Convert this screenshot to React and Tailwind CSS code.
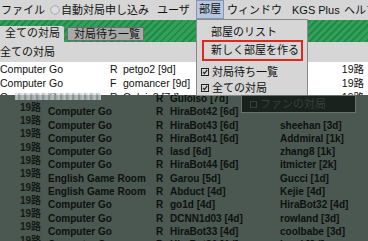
const rows = [
  ["Computer Go", "HiraBot42 [6d]", ""],
  ["Computer Go", "HiraBot43 [6d]", "sheehan [3d]"],
  ["Computer Go", "HiraBot41 [6d]", "Addmiral [1k]"],
  ["Computer Go", "lasd [6d]", "zhang8 [1k]"],
  ["Computer Go", "HiraBot44 [6d]", "itmicter [2k]"],
  ["English Game Room", "Garou [5d]", "Gucci [1d]"],
  ["English Game Room", "Abduct [4d]", "Kejie [4d]"],
  ["Computer Go", "go1d [4d]", "HiraBot32 [4d]"],
  ["Computer Go", "DCNN1d03 [4d]", "rowland [3d]"],
  ["Computer Go", "HiraBot33 [4d]", "coolbabe [3d]"],
  ["Computer Go", "HiraBot30 [4d]", "kumi [3d]"],
]

function Check({ color = "#222" }) {
  return (
    <svg width="8" height="8" viewBox="0 0 8 8" className="shrink-0">
      <rect x="0.5" y="0.5" width="7" height="7" fill="none" stroke={color} />
      <path d="M2 4 L3.5 5.6 L6.2 1.8" fill="none" stroke={color} strokeWidth="1.2" />
    </svg>
  )
}

function TopRow({ room, type, name }) {
  return (
    <div className="h-[14px] flex items-center text-[10.5px] text-[#111]">
      <span className="w-[110px] shrink-0">{room}</span>
      <span className="w-[13px] shrink-0">{type}</span>
      <span className="flex-1">{name}</span>
      <span className="pr-[4px]">19路</span>
    </div>
  )
}

export default function App() {
  return (
    <div className="relative w-[368px] h-[241px] overflow-hidden bg-[#d6d6d6] font-['Liberation_Sans','Noto_Sans_CJK_JP',sans-serif]">
      {/* menu bar */}
      <div className="h-[20px] flex items-center text-[11px] text-[#111] whitespace-nowrap">
        <span className="w-[50px] shrink-0 pl-[1px]">ファイル</span>
        <span className="w-[11px] shrink-0 flex items-center">
          <svg width="10" height="10" viewBox="0 0 10 10">
            <circle cx="5" cy="5" r="4.3" fill="#dcdcdc" stroke="#a9a9a9" />
          </svg>
        </span>
        <span className="w-[96px] shrink-0">自動対局申し込み</span>
        <span className="w-[39px] shrink-0">ユーザ</span>
        <span className="w-[28px] h-[19px] self-start shrink-0 bg-[#b7c6df] border border-[#8b95ab] flex items-center justify-center">部屋</span>
        <span className="w-[68px] shrink-0 pl-[3px]">ウィンドウ</span>
        <span className="w-[52px] shrink-0">KGS Plus</span>
        <span>ヘルプ</span>
      </div>

      {/* tabs */}
      <div className="h-[22px] flex items-end bg-[repeating-linear-gradient(135deg,#32a059_0px,#32a059_3px,#23894a_3px,#23894a_5px)]">
        <div className="w-[64px] h-[16px] bg-[#d6d6d6] rounded-tr-[2px] text-[11px] text-[#111] pl-[5px] leading-[15px]">全ての対局</div>
        <div className="ml-[3px] mb-[1px] w-[77px] h-[14px] bg-[#a9a9a9] border border-[#6e6e6e] text-[11px] text-[#111] pl-[6px] leading-[12px]">対局待ち一覧</div>
      </div>

      <div className="h-[20px] flex items-center text-[11px] text-[#111]">全ての対局</div>

      {/* table */}
      <div className="h-[33px] overflow-hidden bg-white pt-[1px]">
        <TopRow room="Computer Go" type="R" name="petgo2 [9d]" />
        <TopRow room="Computer Go" type="F" name="gomancer [9d]" />
        <TopRow room="Computer Go" type="R" name="Golois8 [7d]" />
      </div>

      {/* dark overlay */}
      <div className="h-[146px] overflow-hidden bg-[#4b5751] text-[#0d110f]">
        <div className="-mt-[3px]">
          <div className="h-[13.3px] flex items-center text-[10px] font-bold whitespace-nowrap">
            <span className="w-[156px] shrink-0" />
            <span className="w-[14px] shrink-0">R</span>
            <span>Guloiso [7d]</span>
          </div>
          {rows.map(([room, a, b], i) => (
            <div key={i} className="h-[13.3px] flex items-start text-[10px] font-bold whitespace-nowrap leading-[13.3px]">
              <span className="w-[48px] shrink-0 pl-[20px] -mt-[4.5px] text-[#141a17]">19路</span>
              <span className="w-[108px] shrink-0">{room}</span>
              <span className="w-[14px] shrink-0">R</span>
              <span className="w-[110px] shrink-0">{a}</span>
              <span>{b}</span>
            </div>
          ))}
        </div>
      </div>

      {/* glitch strip */}
      <div className="absolute left-[15px] top-[93px] w-[86px] h-[7px] opacity-70 bg-[repeating-linear-gradient(90deg,#cfc9dc_0px,#eeedf2_2px,#8e9a94_4px,#d7dbe8_6px)]" />

      {/* dropdown menu */}
      <div className="absolute left-[196px] top-[19px] w-[112px] h-[77px] bg-[#d6d6d6] border border-[#8a8a8a] text-[11px] text-[#111] whitespace-nowrap">
        <div className="mt-[4px] h-[16px] leading-[16px] pl-[14px]">部屋のリスト</div>
        <div className="ml-[5px] w-[101px] h-[21px] border-2 border-[#e2261c] pl-[7px] leading-[17px]">新しく部屋を作る</div>
        <div className="mt-[3px] h-[16px] flex items-center pl-[4px] gap-[3px]">
          <Check />
          <span>対局待ち一覧</span>
        </div>
        <div className="h-[16px] flex items-center pl-[4px] gap-[3px]">
          <Check />
          <span>全ての対局</span>
        </div>
      </div>

      {/* fan games box */}
      <div className="absolute left-[241px] top-[95px] w-[115px] h-[18px] bg-[#1a221e] border border-[#66726c] flex items-center pl-[8px] gap-[3px] text-[11px] text-[#35413b]">
        <svg width="7" height="7" viewBox="0 0 7 7" className="shrink-0">
          <rect x="0.5" y="0.5" width="6" height="6" fill="none" stroke="#35413b" />
        </svg>
        <span>ファンの対局</span>
      </div>
    </div>
  )
}
